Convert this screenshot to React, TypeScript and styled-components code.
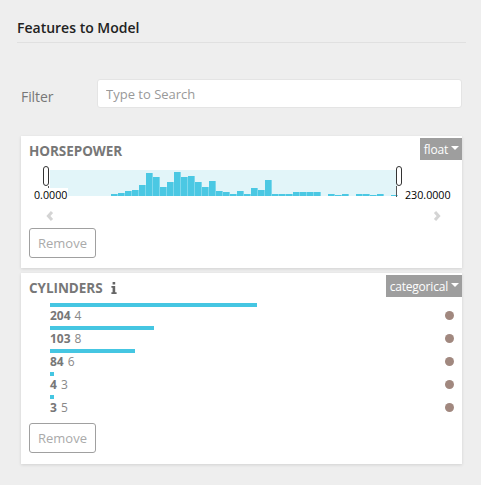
import React from "react";
import styled, { createGlobalStyle } from "styled-components";

const GlobalStyle = createGlobalStyle`
  html, body {
    margin: 0;
    background: #eeeeee;
    font-family: "Open Sans", "Liberation Sans", sans-serif;
  }
  * { box-sizing: border-box; }
`;

const Page = styled.div`
  width: 481px;
  height: 485px;
  overflow: hidden;
  padding: 17px 19px 0 21px;
`;

const Heading = styled.h4`
  margin: 0 0 36px -4px;
  height: 26px;
  padding: 1px 0 0;
  font-size: 14px;
  line-height: 19px;
  font-weight: 600;
  color: #222;
  border-bottom: 1px solid #e0e0e0;
  width: 449px;
`;

const FilterRow = styled.div`
  display: flex;
  align-items: center;
  margin-bottom: 28px;
`;

const FilterLabel = styled.label`
  width: 76px;
  padding-top: 5px;
  font-size: 14px;
  letter-spacing: -0.1px;
  color: #777;
`;

const SearchInput = styled.input`
  width: 365px;
  height: 29px;
  border: 1px solid #e4e4e4;
  border-radius: 3px;
  padding: 0 8px;
  font: 13px "Open Sans", sans-serif;
  background: #fff;
  outline: none;
  &::placeholder { color: #999; opacity: 1; }
`;

const Card = styled.section<{ $height: number }>`
  width: 441px;
  height: ${({ $height }) => $height}px;
  margin-bottom: 5px;
  background: #fff;
  box-shadow: 0 1px 3px rgba(0, 0, 0, 0.12);
  padding: 2px 0 0 8px;
`;

const CardHeader = styled.header`
  display: flex;
  justify-content: space-between;
  align-items: flex-start;
`;

const FeatureName = styled.div`
  display: flex;
  align-items: center;
  gap: 8px;
  padding-top: 4px;
  font-size: 13.5px;
  line-height: 18px;
  font-weight: 700;
  letter-spacing: -0.05px;
  color: #777;
`;

const TypeChip = styled.div`
  height: 22px;
  padding: 0 3px 0 4px;
  display: flex;
  align-items: center;
  gap: 3px;
  font-size: 12px;
  letter-spacing: -0.2px;
  color: #fff;
  background: #9e9e9e;
  &::after {
    content: "";
    border-left: 4px solid transparent;
    border-right: 4px solid transparent;
    border-top: 4px solid #fff;
    margin-bottom: 2px;
  }
`;

const Slider = styled.div`
  position: relative;
  width: 347px;
  height: 26px;
  margin: 10px 0 0 21px;
`;

const Band = styled.div`
  display: flex;
  align-items: flex-end;
  height: 26px;
  padding-left: 61px;
  background: #e2f5f9;
`;

const HistBar = styled.div`
  flex: 0 0 7px;
  &::before {
    content: "";
    display: block;
    height: 100%;
    background: #4bc8e3;
    border-right: 1px solid #7fd8ec;
  }
`;

const Handle = styled.div<{ $side: "left" | "right" }>`
  position: absolute;
  top: -4px;
  ${({ $side }) => ($side === "left" ? "left: -7px;" : "right: -5px;")}
  width: 6px;
  height: 20px;
  border: 1px solid #333;
  border-radius: 3px;
  background: #fff;
  &::after {
    content: "";
    position: absolute;
    ${({ $side }) => ($side === "left" ? "right: -1px;" : "left: -1px;")}
    top: 19px;
    width: 1px;
    height: 11px;
    background: #555;
  }
`;

const RangeLabel = styled.span<{ $side: "left" | "right" }>`
  position: absolute;
  top: 18px;
  ${({ $side }) => ($side === "left" ? "left: -17px;" : "left: 354px;")}
  padding: 0 1px;
  background: ${({ $side }) => ($side === "left" ? "#fff" : "transparent")};
  font-size: 10.7px;
  line-height: 14px;
  color: #000;
`;

const Pager = styled.div`
  display: flex;
  justify-content: space-between;
  margin: 14px 0 0 17px;
  width: 395px;
  height: 12px;
`;

const RemoveButton = styled.button<{ $top: number }>`
  display: block;
  width: 67px;
  height: 30px;
  margin-top: ${({ $top }) => $top}px;
  padding: 0;
  background: #fff;
  border: 1px solid #a0a0a0;
  border-radius: 3px;
  font: 13px "Open Sans", sans-serif;
  color: #aaa;
`;

const CategoryList = styled.div`
  margin: 6px 0 0 21px;
  width: 404px;
`;

const CategoryRow = styled.div`
  position: relative;
  height: 23px;
`;

const CountBar = styled.div`
  height: 4px;
  background: #45c6e2;
`;

const CategoryText = styled.div`
  font-size: 12px;
  line-height: 17px;
  color: #888;
  b { font-weight: 700; color: #777; margin-right: 4px; }
`;

const Dot = styled.span`
  position: absolute;
  right: 0;
  top: 8px;
  width: 9px;
  height: 9px;
  border-radius: 50%;
  background: #a1887f;
`;

const bins: number[] = [
  2, 3, 5, 6, 11, 23, 19, 9, 14, 24, 19, 20, 14, 9, 15, 5, 4, 2, 5, 2, 8, 6, 16, 2,
  2, 2, 4, 4, 4, 4, 0, 2, 1, 2, 0, 2, 2, 1, 2, 0, 1,
];

const categories = [
  { value: 204, key: 4, width: 207 },
  { value: 103, key: 8, width: 104 },
  { value: 84, key: 6, width: 85 },
  { value: 4, key: 3, width: 4 },
  { value: 3, key: 5, width: 4 },
];

const Chevron = ({ flip }: { flip?: boolean }) => (
  <svg width="8" height="12" viewBox="0 0 8 12" style={flip ? { transform: "scaleX(-1)" } : undefined}>
    <path d="M6 2 2.4 6 6 10" fill="none" stroke="#d4d4d4" strokeWidth="3" />
  </svg>
);

const InfoIcon = () => (
  <svg width="6" height="12" viewBox="0 0 6 12">
    <path
      d="M1.6 0h2.6v2.6H1.6zM0.4 4h3.8v6.2H5.6V12H0.4v-1.8h1.2V5.8H0.4z"
      fill="#666"
    />
  </svg>
);

export default function App() {
  return (
    <Page>
      <GlobalStyle />
      <Heading>Features to Model</Heading>
      <FilterRow>
        <FilterLabel>Filter</FilterLabel>
        <SearchInput placeholder="Type to Search" />
      </FilterRow>

      <Card $height={132}>
        <CardHeader>
          <FeatureName>HORSEPOWER</FeatureName>
          <TypeChip>float</TypeChip>
        </CardHeader>
        <Slider>
          <Band>
            {bins.map((h, i) => (
              <HistBar key={i} style={{ height: h }} />
            ))}
          </Band>
          <Handle $side="left" />
          <Handle $side="right" />
          <RangeLabel $side="left">0.0000</RangeLabel>
          <RangeLabel $side="right">230.0000</RangeLabel>
        </Slider>
        <Pager>
          <Chevron />
          <Chevron flip />
        </Pager>
        <RemoveButton $top={6}>Remove</RemoveButton>
      </Card>

      <Card $height={191}>
        <CardHeader>
          <FeatureName>
            CYLINDERS <InfoIcon />
          </FeatureName>
          <TypeChip>categorical</TypeChip>
        </CardHeader>
        <CategoryList>
          {categories.map((c) => (
            <CategoryRow key={c.value}>
              <CountBar style={{ width: c.width }} />
              <CategoryText>
                <b>{c.value}</b>
                {c.key}
              </CategoryText>
              <Dot />
            </CategoryRow>
          ))}
        </CategoryList>
        <RemoveButton $top={5}>Remove</RemoveButton>
      </Card>
    </Page>
  );
}
